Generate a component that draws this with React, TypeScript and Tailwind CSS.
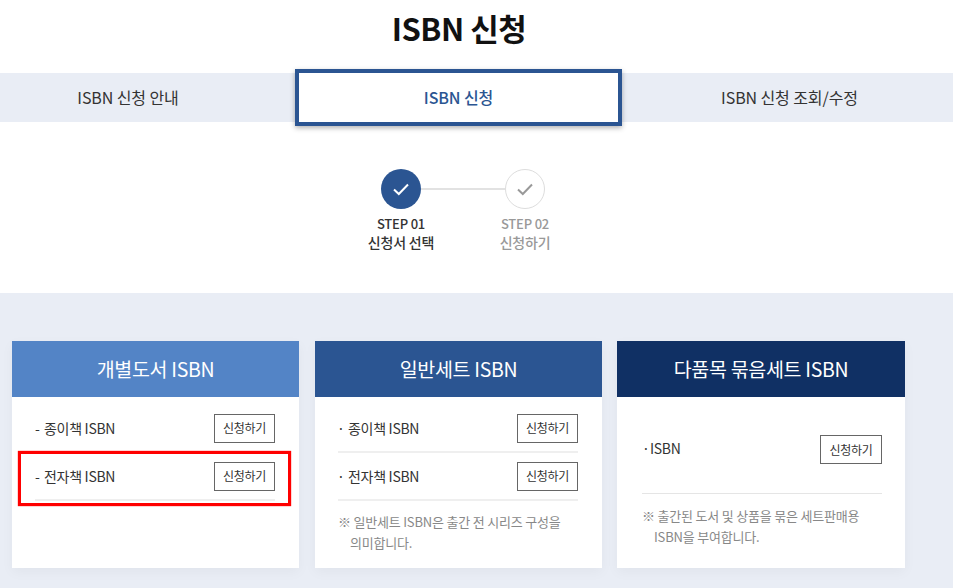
const font = "[font-family:'Noto_Sans_CJK_KR','Noto_Sans',sans-serif]"

function Row({ label, dot, line = true }: { label: string; dot?: boolean; line?: boolean }) {
  return (
    <div className={`flex h-[48px] items-center justify-between border-b-2 ${line ? "border-[#efefef]" : "border-transparent"}`}>
      <p className="flex text-[14px] tracking-[-0.3px] text-[#333]">
        <span className={dot ? "ml-[-1px] w-[11px]" : "w-[9px]"}>{dot ? "·" : "-"}</span>
        {label}
      </p>
      <button className="h-[29px] w-[61px] border border-[#666] bg-white text-[12px] tracking-[-0.3px] text-[#333]">
        신청하기
      </button>
    </div>
  )
}

function Card({ title, color, wide, children }: { title: string; color: string; wide?: boolean; children: React.ReactNode }) {
  return (
    <div className={`flex h-[227px] flex-col bg-white shadow-[0_4px_12px_rgba(0,0,0,0.04)] ${wide ? "w-[288px]" : "w-[287px]"}`}>
      <h2 className={`flex h-[56px] items-center justify-center text-[19.5px] tracking-[-0.3px] text-white ${color}`}>
        {title}
      </h2>
      {children}
    </div>
  )
}

function Check({ done }: { done: boolean }) {
  return (
    <div
      className={`flex h-[40px] w-[40px] items-center justify-center rounded-full ${
        done ? "bg-[#2b5592]" : "border border-[#ddd] bg-white"
      }`}
    >
      <svg width="18" height="14" viewBox="0 0 18 14" fill="none">
        <path d="M2 7.5 6.8 12 16 2.5" stroke={done ? "#fff" : "#999"} strokeWidth="2" />
      </svg>
    </div>
  )
}

export default function App() {
  return (
    <div className={`h-[588px] w-[966px] overflow-hidden bg-white ${font}`}>
      <div className="w-[953px]">
        <h1 className="flex h-[73px] items-center justify-center pb-[17px] pr-[35px] text-[31px] font-bold tracking-[-0.5px] text-[#111]">
          ISBN 신청
        </h1>

        {/* Tabs */}
        <div className="flex h-[49px] items-center bg-[#e9edf5] text-[16px] tracking-[-0.1px] text-[#333]">
          <div className="w-[256px] pb-[2px] text-center">ISBN 신청 안내</div>
          <div className="ml-[39px] flex h-[57px] w-[327px] items-center justify-center border-[4px] border-[#2b5592] bg-white pb-[2px] font-medium text-[#2b5592] shadow-[0_2px_5px_rgba(0,0,0,0.3)]">
            ISBN 신청
          </div>
          <div className="flex-1 pb-[2px] pl-[4px] text-center">ISBN 신청 조회/수정</div>
        </div>

        {/* Steps */}
        <div className="flex h-[171px] flex-col items-center pt-[47px] pr-[27px]">
          <div className="flex items-center">
            <Check done />
            <div className="h-[2px] w-[84px] bg-[#e2e2e2]" />
            <Check done={false} />
          </div>
          <div className="mt-[5px] flex text-center text-[13px] leading-[20px] tracking-[-0.2px]">
            <div className="w-[124px] font-medium text-[#333]">
              <p>STEP 01</p>
              <p className="mt-[-2px] text-[14px]">신청서 선택</p>
            </div>
            <div className="w-[124px] font-medium text-[#999]">
              <p>STEP 02</p>
              <p className="mt-[-2px] text-[14px]">신청하기</p>
            </div>
          </div>
        </div>

        {/* Cards */}
        <div className="relative h-[295px] bg-[#e9edf5] pt-[48px] pl-[12px]">
          <div className="flex">
            <Card title="개별도서 ISBN" color="bg-[#5384c6]">
              <div className="pt-[8px] pr-[24px] pl-[23px]">
                <Row label="종이책 ISBN" line={false} />
                <Row label="전자책 ISBN" />
              </div>
            </Card>
            <div className="ml-[16px]">
              <Card title="일반세트 ISBN" color="bg-[#2b5592]">
                <div className="pt-[8px] pr-[24px] pl-[23px]">
                  <Row label="종이책 ISBN" dot />
                  <Row label="전자책 ISBN" dot />
                  <p className="mt-[10px] pl-[12px] -indent-[12px] text-[13px] leading-[21px] tracking-[-0.2px] text-[#888]">
                    ※ 일반세트 ISBN은 출간 전 시리즈 구성을
                    <br />
                    의미합니다.
                  </p>
                </div>
              </Card>
            </div>
            <div className="ml-[15px]">
              <Card title="다품목 묶음세트 ISBN" color="bg-[#103064]" wide>
                <div className="pt-[28px] pr-[23px] pl-[25px]">
                  <div className="flex h-[69px] items-start justify-between border-b border-[#e5e5e5] pt-[10px]">
                    <p className="flex pt-[3px] text-[14px] tracking-[-0.3px] text-[#333]">
                      <span className="w-[8px]">·</span>ISBN
                    </p>
                    <button className="h-[29px] w-[62px] border border-[#666] bg-white text-[12px] tracking-[-0.3px] text-[#333]">
                      신청하기
                    </button>
                  </div>
                  <p className="mt-[11px] pl-[12px] -indent-[12px] text-[13px] leading-[21px] tracking-[-0.2px] text-[#888]">
                    ※ 출간된 도서 및 상품을 묶은 세트판매용
                    <br />
                    ISBN을 부여합니다.
                  </p>
                </div>
              </Card>
            </div>
          </div>
          {/* red annotation box */}
          <div className="absolute left-[18px] top-[158px] h-[55px] w-[273px] border-[3px] border-[#f00] shadow-[0_0_1px_#f00]" />
        </div>
      </div>
    </div>
  )
}
